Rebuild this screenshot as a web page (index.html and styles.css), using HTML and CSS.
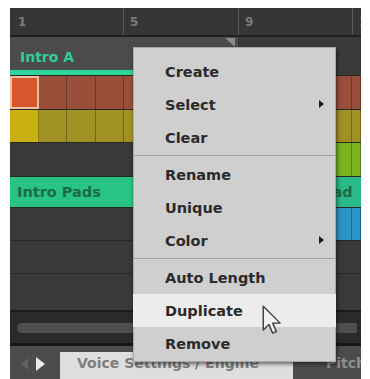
FILE: index.html
```
<!DOCTYPE html>
<html>
<head>
<meta charset="utf-8">
<link rel="stylesheet" href="styles.css">
</head>
<body>
<div class="app">
  <div class="ruler">
    <div class="bar first"><span>1</span></div>
    <div class="bar b2"><span>5</span></div>
    <div class="bar b3"><span>9</span></div>
    <div class="bar b4"><span>13</span></div>
  </div>
  <div class="scene">
    <div class="scene-clip"><span>Intro A</span></div>
    <div class="scene-rest"></div>
    <svg class="marker" width="10" height="9" viewBox="0 0 10 9"><polygon points="0,0 10,0 10,9" fill="#8a8a8a"/></svg>
  </div>
  <div class="scene-bar"><div class="bar-fill"></div></div>

  <div class="row r1">
    <div class="c o sel"></div><div class="c o"></div><div class="c o"></div><div class="c o"></div>
    <div class="c o"></div><div class="c o"></div><div class="c o"></div><div class="c o"></div>
    <div class="c o"></div><div class="c o"></div><div class="c o"></div><div class="c o"></div><div class="c o"></div>
  </div>
  <div class="row r2">
    <div class="c y sel"></div><div class="c y"></div><div class="c y"></div><div class="c y"></div>
    <div class="c y"></div><div class="c y"></div><div class="c y"></div><div class="c y"></div>
    <div class="c y"></div><div class="c y"></div><div class="c y"></div><div class="c y"></div><div class="c y"></div>
  </div>
  <div class="row r3">
    <div class="span11"></div><div class="c l"></div><div class="c l"></div>
  </div>
  <div class="row r4">
    <div class="clip pads span8">Intro Pads</div>
    <div class="span1"></div>
    <div class="clip pads2 span4">Intro Pad</div>
  </div>
  <div class="row r5">
    <div class="span11"></div><div class="c b"></div><div class="c b"></div>
  </div>
  <div class="row r6"></div>
  <div class="row r7"></div>

  <div class="scroll"><div class="thumb"></div></div>

  <div class="footer">
    <svg class="arr" width="8" height="14" viewBox="0 0 8 14"><polygon points="8,1 1,7 8,13" fill="#626262"/></svg>
    <svg class="arr right" width="9" height="14" viewBox="0 0 9 14"><polygon points="0,0 9,7 0,14" fill="#ececec"/></svg>
    <div class="tab">Voice Settings / Engine</div>
    <div class="pitch">Pitch</div>
  </div>

  <div class="menu">
    <div class="item">Create</div>
    <div class="item">Select<span class="sub"></span></div>
    <div class="item">Clear</div>
    <div class="sep"></div>
    <div class="item">Rename</div>
    <div class="item">Unique</div>
    <div class="item">Color<span class="sub"></span></div>
    <div class="sep"></div>
    <div class="item">Auto Length</div>
    <div class="item hl">Duplicate</div>
    <div class="item">Remove</div>
  </div>

  <svg class="cursor" width="20" height="30" viewBox="0 0 16 24">
    <path d="M1,1 L1,20 L5.5,15.5 L8.5,22.5 L11.5,21.3 L8.6,14.5 L14.5,14.5 Z" fill="#f2f2f2" stroke="#3a3a3a" stroke-width="1.1" stroke-linejoin="round"/>
  </svg>
</div>
</body>
</html>
```

FILE: styles.css
```
* { box-sizing: border-box; }
html, body { margin: 0; padding: 0; background: #ffffff; }
body { font-family: "DejaVu Sans", "Liberation Sans", sans-serif; }

.app {
  position: relative;
  margin: 8px 0 0 10px;
  width: 351px;
  height: 371px;
  overflow: hidden;
  background: #393939;
}

.ruler {
  display: flex;
  height: 29px;
  background: #363636;
  border-bottom: 2px solid #1f1f1f;
}
.bar {
  flex: none;
  height: 100%;
  padding-left: 6px;
  padding-top: 8px;
  font-size: 12px;
  font-weight: bold;
  color: #7c7c7c;
  line-height: 12px;
  overflow: hidden;
  white-space: nowrap;
}
.bar.first { width: 113px; padding-left: 8px; }
.b2 { width: 115px; border-left: 1px solid #5c5c5c; }
.b3 { width: 114px; border-left: 1px solid #5c5c5c; }
.b4 { flex: 1 1 0; min-width: 0; border-left: 1px solid #5c5c5c; }

.scene {
  position: relative;
  display: flex;
  height: 33px;
}
.scene-clip {
  width: 228px;
  background: #4b4b4b;
  display: flex;
  align-items: center;
  padding: 6px 0 0 10px;
  font-size: 14px;
  font-weight: bold;
  color: #2fd092;
}
.scene-rest { flex: 1; background: #3a3a3a; }
.marker { position: absolute; left: 215px; top: 1px; }

.scene-bar {
  display: flex;
  height: 6px;
  border-bottom: 1px solid #262626;
  background: #3a3a3a;
}
.bar-fill { width: 228px; background: #2fd69c; }

.row {
  display: grid;
  grid-template-columns: repeat(12, 28.5px) 1fr;
  border-bottom: 1px solid #272727;
  background: #393939;
}
.r1 { height: 34px; }
.r2 { height: 33px; }
.r3 { height: 34px; }
.r4 { height: 31px; }
.r5 { height: 33px; }
.r6 { height: 33px; }
.r7 { height: 36px; border-bottom: 0; }

.c { border-right: 1px solid rgba(0,0,0,0.28); }
.o { background: #984e39; }
.o.sel { background: #d8562b; border: 2px solid #f2bfa3; }
.y { background: #a09125; }
.y.sel { background: #c9b114; }
.l { background: #7cb321; }
.b { background: #2a94c6; }

.span11 { grid-column: span 11; }
.span8 { grid-column: span 8; }
.span4 { grid-column: span 4; }
.span1 { grid-column: span 1; }

.clip {
  display: flex;
  align-items: center;
  font-size: 14.5px;
  font-weight: bold;
  color: #1b6a48;
  white-space: nowrap;
  overflow: hidden;
}
.pads { background: #28c485; padding-left: 7px; }
.pads2 { background: #2bb98a; padding-left: 11px; }

.scroll {
  height: 33px;
  background: #2a2a2a;
  border-top: 2px solid #1b1b1b;
  padding: 11px 0 0 7px;
}
.thumb {
  height: 10px;
  width: 340px;
  background: #4f4f4f;
  border-radius: 5px 0 0 5px;
}

.footer {
  display: flex;
  align-items: flex-start;
  height: 36px;
  background: #4c4c4c;
  border-top: 3px solid #161616;
}
.arr { margin: 11px 0 0 10px; flex: none; }
.arr.right { margin-left: 8px; }
.tab {
  flex: none;
  margin: 6px 0 0 15px;
  width: 233px;
  height: 27px;
  background: #dedede;
  padding-left: 17px;
  font-size: 14px;
  font-weight: bold;
  line-height: 22px;
  color: #7e7e7e;
  white-space: nowrap;
  overflow: hidden;
}
.pitch {
  flex: none;
  margin: 6px 0 0 33px;
  font-size: 14px;
  font-weight: bold;
  line-height: 22px;
  color: #8e8e8e;
}

.menu {
  position: absolute;
  left: 123px;
  top: 39px;
  width: 203px;
  height: 315px;
  padding: 7px 0 3px 0;
  background: #cfcfcf;
  border: 1px solid #a9a9a9;
  box-shadow: 1px 2px 4px rgba(0,0,0,0.55);
}
.item {
  position: relative;
  height: 33px;
  display: flex;
  align-items: center;
  padding-left: 31px;
  font-size: 14.5px;
  font-weight: bold;
  color: #2b2b2b;
}
.item.hl { background: #ececec; margin: 0 -1px; padding-left: 32px; }
.sep {
  height: 1px;
  margin: 1px 0 2px 0;
  background: #a2a2a2;
}
.sub {
  position: absolute;
  right: 11px;
  top: 12px;
  width: 0;
  height: 0;
  border-top: 4px solid transparent;
  border-bottom: 4px solid transparent;
  border-left: 5px solid #1a1a1a;
}

.cursor { position: absolute; left: 252px; top: 297px; }
```
